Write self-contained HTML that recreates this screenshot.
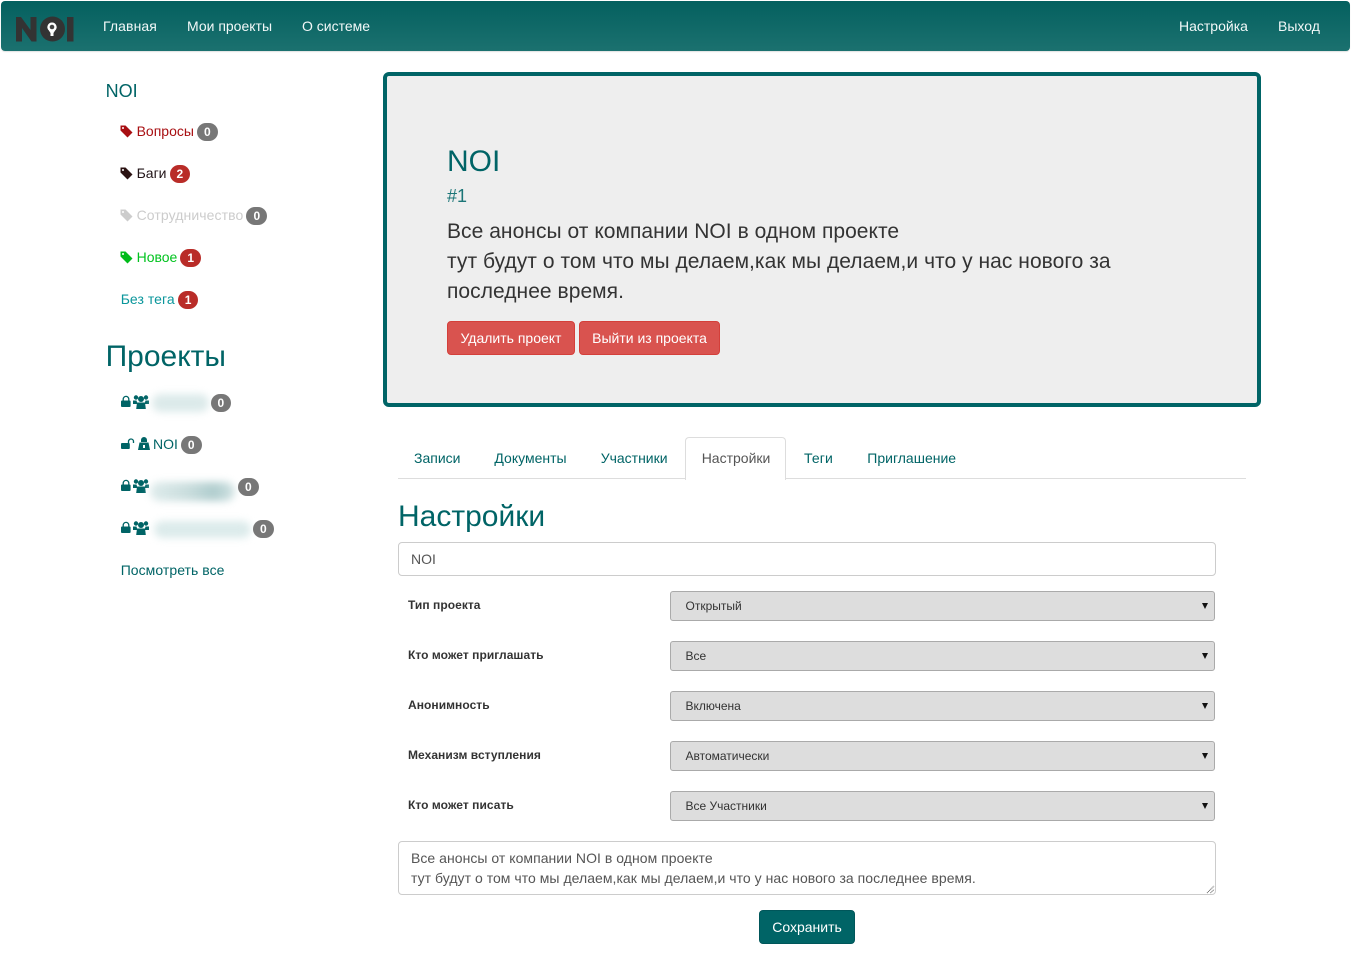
<!DOCTYPE html>
<html lang="ru"><head><meta charset="utf-8"><title>NOI</title>
<style>
html,body{margin:0;padding:0;background:#fff}
body{position:relative;width:1351px;height:959px;overflow:hidden;font-family:"Liberation Sans",sans-serif;font-size:14px;color:#333}
.a{position:absolute;white-space:nowrap;line-height:20px}
.nav{left:1px;top:1px;width:1349px;height:50px;background:linear-gradient(#04605f,#1b716f);border-radius:4px;position:absolute;box-shadow:0 1px 1px rgba(0,0,0,.12)}
.nl{color:#f2f8f8;top:16px}
.b{display:inline-block;background:#777;color:#fff;font-weight:bold;font-size:12px;line-height:12px;padding:3px 7px;border-radius:10px;vertical-align:baseline;margin-left:3px;letter-spacing:0}
.r{background:#b92c28}
.t{color:#006466}
.jt{position:absolute;left:383px;top:72px;width:870px;height:327px;background:#eee;border:4px solid #006466;border-radius:6px}
.btn{position:absolute;top:321px;height:32px;line-height:32px;background:#d9534f;border:1px solid #d43f3a;color:#fff;border-radius:4px;text-align:center}
.lab{left:408px;font-weight:bold;font-size:12px;color:#333;letter-spacing:.05px}
.sel{position:absolute;left:670px;width:543px;height:28px;background:#ddd;border:1px solid #aaa;border-radius:3px;font-size:12px;line-height:28px;color:#333;text-indent:14.5px}
.sel:after{content:"";position:absolute;right:6px;top:11px;border-left:3.5px solid transparent;border-right:3.5px solid transparent;border-top:6px solid #111}
.tab{top:448px;color:#006466}
.blur{position:absolute;filter:blur(4px);border-radius:12px}
svg{position:absolute;overflow:visible}
</style></head><body>
<div class="nav"></div>
<svg style="left:15px;top:16px" width="60" height="26" viewBox="0 0 60 26">
<path d="M1 25.500V1h5l9.500 13V1h6v24.500h-5L7 12v13.500z" fill="#333"/>
<circle cx="37.500" cy="13" r="12.500" fill="#333"/>
<path d="M37 6.500a4.600 4.600 0 0 1 3.200 7.900L38.500 17v3h-3v-3l-1.700-2.600A4.600 4.600 0 0 1 37 6.500z" fill="#fff"/>
<circle cx="37" cy="11" r="2.300" fill="#444"/>
<rect x="52" y="1" width="6.500" height="24.500" fill="#333"/>
</svg>
<div class="a nl" style="left:103px;letter-spacing:.1px">Главная</div>
<div class="a nl" style="left:187px">Мои проекты</div>
<div class="a nl" style="left:302px">О системе</div>
<div class="a nl" style="left:1179px">Настройка</div>
<div class="a nl" style="left:1278px">Выход</div>

<div class="a t" style="left:105.600px;top:81px;font-size:18px">NOI</div>

<svg style="left:120px;top:125px" width="13" height="13" viewBox="0 0 13 13"><path d="M0.500 0.500H5.500L12.500 7.500 7.500 12.500 0.500 5.500z" fill="#a80f12"/><circle cx="3" cy="3" r="1" fill="#fff"/></svg>
<div class="a" style="left:136.600px;top:121px;color:#a80f12">Вопросы<span class="b">0</span></div>
<svg style="left:120px;top:167px" width="13" height="13" viewBox="0 0 13 13"><path d="M0.500 0.500H5.500L12.500 7.500 7.500 12.500 0.500 5.500z" fill="#2b1212"/><circle cx="3" cy="3" r="1" fill="#fff"/></svg>
<div class="a" style="left:136.600px;top:163px;color:#221518">Баги<span class="b r">2</span></div>
<svg style="left:120px;top:209px" width="13" height="13" viewBox="0 0 13 13"><path d="M0.500 0.500H5.500L12.500 7.500 7.500 12.500 0.500 5.500z" fill="#ccc"/><circle cx="3" cy="3" r="1" fill="#fff"/></svg>
<div class="a" style="left:136.600px;top:205px;color:#ccc;letter-spacing:.1px">Сотрудничество<span class="b">0</span></div>
<svg style="left:120px;top:251px" width="13" height="13" viewBox="0 0 13 13"><path d="M0.500 0.500H5.500L12.500 7.500 7.500 12.500 0.500 5.500z" fill="#00bb1a"/><circle cx="3" cy="3" r="1" fill="#fff"/></svg>
<div class="a" style="left:136.600px;top:247px;color:#00c31e">Новое<span class="b r">1</span></div>
<div class="a" style="left:120.700px;top:289px;color:#0a969b;letter-spacing:.05px">Без тега<span class="b r">1</span></div>

<div class="a t" style="left:105.600px;top:340px;font-size:30px;line-height:34px">Проекты</div>

<svg style="left:120.500px;top:396px" width="10" height="11" viewBox="0 0 10 11"><path d="M2.200 5V3.200a2.800 2.800 0 0 1 5.600 0V5" fill="none" stroke="#006466" stroke-width="1.300"/><rect y="4.500" width="9.600" height="6.500" rx="1" fill="#006466"/></svg>
<svg style="left:133px;top:395px" width="16" height="14" viewBox="0 0 16 14"><g fill="#006466"><circle cx="3" cy="2.500" r="2.200"/><circle cx="13" cy="2.500" r="2.200"/><circle cx="8" cy="4" r="3"/><path d="M0 5.500h3.500l1 3.500H0zM12.500 5.500H16V9h-4.500z"/><path d="M4 7.500h8l.8 6.500H3.200z"/></g></svg>
<div class="blur" style="left:152px;top:394px;width:57px;height:18px;background:#dceaea"></div>
<span class="a" style="left:207.500px;top:392px"><span class="b">0</span></span>

<svg style="left:120.500px;top:438px" width="14" height="12" viewBox="0 0 14 12"><path d="M7.500 5V3.500a2.500 2.500 0 0 1 5 0V5" fill="none" stroke="#006466" stroke-width="1.300"/><rect y="5" width="8.800" height="6" rx="1" fill="#006466"/></svg>
<svg style="left:137.500px;top:437px" width="12" height="13" viewBox="0 0 12 13"><path d="M3 5V3a3 3 0 0 1 6 0v2zM1.500 5.500h9L12 13H0z" fill="#006466"/><rect x="5" y="8" width="2" height="3" fill="#fff"/></svg>
<div class="a t" style="left:153px;top:434px">NOI<span class="b">0</span></div>

<svg style="left:120.500px;top:480px" width="10" height="11" viewBox="0 0 10 11"><path d="M2.200 5V3.200a2.800 2.800 0 0 1 5.600 0V5" fill="none" stroke="#006466" stroke-width="1.300"/><rect y="4.500" width="9.600" height="6.500" rx="1" fill="#006466"/></svg>
<svg style="left:133px;top:479px" width="16" height="14" viewBox="0 0 16 14"><g fill="#006466"><circle cx="3" cy="2.500" r="2.200"/><circle cx="13" cy="2.500" r="2.200"/><circle cx="8" cy="4" r="3"/><path d="M0 5.500h3.500l1 3.500H0zM12.500 5.500H16V9h-4.500z"/><path d="M4 7.500h8l.8 6.500H3.200z"/></g></svg>
<div class="blur" style="left:150px;top:482px;width:85px;height:19px;background:linear-gradient(90deg,#dfecec,#c9dddd 45%,#b0cdce 75%,#d3e4e4)"></div>
<span class="a" style="left:235px;top:476px"><span class="b">0</span></span>

<svg style="left:120.500px;top:522px" width="10" height="11" viewBox="0 0 10 11"><path d="M2.200 5V3.200a2.800 2.800 0 0 1 5.600 0V5" fill="none" stroke="#006466" stroke-width="1.300"/><rect y="4.500" width="9.600" height="6.500" rx="1" fill="#006466"/></svg>
<svg style="left:133px;top:521px" width="16" height="14" viewBox="0 0 16 14"><g fill="#006466"><circle cx="3" cy="2.500" r="2.200"/><circle cx="13" cy="2.500" r="2.200"/><circle cx="8" cy="4" r="3"/><path d="M0 5.500h3.500l1 3.500H0zM12.500 5.500H16V9h-4.500z"/><path d="M4 7.500h8l.8 6.500H3.200z"/></g></svg>
<div class="blur" style="left:154px;top:521px;width:97px;height:17px;background:#dcebeb"></div>
<span class="a" style="left:250px;top:518px"><span class="b">0</span></span>

<div class="a t" style="left:120.700px;top:560px;letter-spacing:.05px">Посмотреть все</div>

<div class="jt"></div>
<div class="a t" style="left:447px;top:145px;font-size:30px;line-height:34px">NOI</div>
<div class="a" style="left:447px;top:186px;font-size:18px;color:#1b7577">#1</div>
<div class="a" style="left:447px;top:217px;font-size:21px;line-height:30px;color:#333;letter-spacing:.046px">Все анонсы от компании NOI в одном проекте<br>тут будут о том что мы делаем,как мы делаем,и что у нас нового за<br>последнее время.</div>
<div class="btn" style="left:447px;width:126px">Удалить проект</div>
<div class="btn" style="left:579px;width:139px">Выйти из проекта</div>

<div style="position:absolute;left:398px;top:478px;width:848px;height:1px;background:#ddd"></div>
<div style="position:absolute;left:685px;top:437px;width:99px;height:42px;background:#fff;border:1px solid #ddd;border-bottom:0;border-radius:4px 4px 0 0"></div>
<div class="a tab" style="left:414px">Записи</div>
<div class="a tab" style="left:494.400px">Документы</div>
<div class="a tab" style="left:600.700px">Участники</div>
<div class="a tab" style="left:701.700px;color:#555">Настройки</div>
<div class="a tab" style="left:804px;letter-spacing:.1px">Теги</div>
<div class="a tab" style="left:867.300px">Приглашение</div>

<div class="a t" style="left:398px;top:500px;font-size:30px;line-height:34px">Настройки</div>
<div style="position:absolute;left:398px;top:542px;width:816px;height:32px;border:1px solid #ccc;border-radius:4px;background:#fff"></div>
<div class="a" style="left:411px;top:549px;color:#555">NOI</div>

<div class="a lab" style="top:595px">Тип проекта</div><div class="sel" style="top:591px">Открытый</div>
<div class="a lab" style="top:645px">Кто может приглашать</div><div class="sel" style="top:641px">Все</div>
<div class="a lab" style="top:695px">Анонимность</div><div class="sel" style="top:691px">Включена</div>
<div class="a lab" style="top:745px">Механизм вступления</div><div class="sel" style="top:741px">Автоматически</div>
<div class="a lab" style="top:795px">Кто может писать</div><div class="sel" style="top:791px">Все Участники</div>

<div style="position:absolute;left:398px;top:841px;width:816px;height:52px;border:1px solid #ccc;border-radius:4px;background:#fff"></div>
<div class="a" style="left:411px;top:848px;color:#555;letter-spacing:.036px">Все анонсы от компании NOI в одном проекте<br>тут будут о том что мы делаем,как мы делаем,и что у нас нового за последнее время.</div>
<svg style="left:1206px;top:885px" width="9" height="9" viewBox="0 0 9 9"><path d="M1 8L8 1M4.500 8L8 4.500" stroke="#666" stroke-width="1" stroke-dasharray="1 .6" fill="none"/></svg>

<div style="position:absolute;left:759px;top:910px;width:94px;height:32px;line-height:32px;background:#006466;border:1px solid #00565a;border-radius:4px;color:#fff;text-align:center">Сохранить</div>
</body></html>
